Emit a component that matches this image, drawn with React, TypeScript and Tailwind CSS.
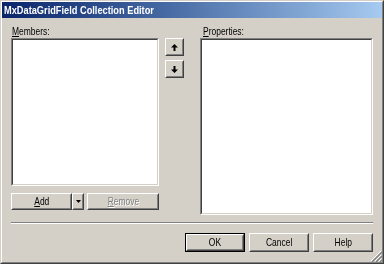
import React from 'react'

const font = { fontFamily: '"Liberation Sans", Arial, sans-serif' }

function Label({ children, className = '' }: { children: React.ReactNode; className?: string }) {
  return <span className={`inline-block text-[11px] leading-[13px] scale-x-[0.77] ${className}`}>{children}</span>
}

function Raised({ className = '', children, isDefault = false }: { className?: string; children?: React.ReactNode; isDefault?: boolean }) {
  const inner = (
    <div className="h-full w-full border border-t-white border-l-white border-r-[#404040] border-b-[#404040]">
      <div className="h-full w-full border border-t-[#d4d0c8] border-l-[#d4d0c8] border-r-[#808080] border-b-[#808080] flex items-center justify-center">
        {children}
      </div>
    </div>
  )
  if (isDefault) return <div className={`border border-black ${className}`}>{inner}</div>
  return <div className={className}>{inner}</div>
}

function Sunken({ className = '' }: { className?: string }) {
  return (
    <div className={`border border-t-[#808080] border-l-[#808080] border-r-white border-b-white ${className}`}>
      <div className="h-full w-full border border-t-[#404040] border-l-[#404040] border-r-[#d4d0c8] border-b-[#d4d0c8] bg-white" />
    </div>
  )
}

function Arrow({ down = false }: { down?: boolean }) {
  return (
    <svg width="7" height="7" viewBox="0 0 7 7" className={down ? 'rotate-180' : ''}>
      <path d="M3.5 0 L7 3.5 L4.5 3.5 L4.5 7 L2.5 7 L2.5 3.5 L0 3.5 Z" fill="#000" />
    </svg>
  )
}

export default function App() {
  return (
    <div className="w-[384px] h-[264px] bg-[#d4d0c8] border border-t-[#d4d0c8] border-l-[#d4d0c8] border-r-[#404040] border-b-[#404040]" style={font}>
      <div className="h-full w-full flex flex-col border border-t-white border-l-white border-r-[#808080] border-b-[#808080]">
        <div className="h-[16px] bg-gradient-to-r from-[#0a246a] to-[#a6caf0] flex items-center px-[2px]">
          <span className="inline-block origin-left scale-x-[0.84] text-white font-bold text-[11px] leading-none whitespace-nowrap">MxDataGridField Collection Editor</span>
        </div>

        <div className="flex-1 flex flex-col px-[9px] pt-[7px] relative">
          <div className="flex">
            <div className="w-[148px] flex flex-col">
              <div className="h-[13px] flex items-start text-black pl-[1px] whitespace-nowrap">
                <Label className="origin-left"><span className="underline">M</span>embers:</Label>
              </div>
              <Sunken className="h-[148px]" />
              <div className="flex mt-[7px] h-[17px]">
                <Raised className="w-[61px] h-full"><Label className="text-black"><span className="underline">A</span>dd</Label></Raised>
                <Raised className="w-[12px] h-full">
                  <svg width="5" height="3" viewBox="0 0 5 3"><path d="M0 0 H5 L2.5 3 Z" fill="#000" /></svg>
                </Raised>
                <Raised className="w-[72px] h-full ml-[3px]">
                  <Label className="text-[#808080] [text-shadow:1px_1px_0_#fff]"><span className="underline">R</span>emove</Label>
                </Raised>
              </div>
            </div>

            <div className="flex flex-col gap-[4px] ml-[6px] mt-[13px] w-[19px]">
              <Raised className="h-[18px]"><Arrow /></Raised>
              <Raised className="h-[18px]"><Arrow down /></Raised>
            </div>

            <div className="flex-1 flex flex-col ml-[16px]">
              <div className="h-[13px] flex items-start text-black pl-[3px] whitespace-nowrap">
                <Label className="origin-left"><span className="underline">P</span>roperties:</Label>
              </div>
              <Sunken className="h-[177px]" />
            </div>
          </div>

          <div className="mt-[7px] border-t border-t-[#808080] border-b border-b-white" />

          <div className="flex justify-end gap-[4px] mt-[9px]">
            <Raised isDefault className="w-[60px] h-[19px]"><Label className="text-black">OK</Label></Raised>
            <Raised className="w-[60px] h-[19px]"><Label className="text-black">Cancel</Label></Raised>
            <Raised className="w-[60px] h-[19px]"><Label className="text-black">Help</Label></Raised>
          </div>

          <svg width="12" height="12" viewBox="0 0 12 12" className="absolute right-0 bottom-0">
            <path d="M11 1 L1 11 M11 5 L5 11 M11 9 L9 11" stroke="#fff" strokeWidth="1" />
            <path d="M12 2 L2 12 M12 6 L6 12 M12 10 L10 12" stroke="#808080" strokeWidth="1.4" />
          </svg>
        </div>
      </div>
    </div>
  )
}
